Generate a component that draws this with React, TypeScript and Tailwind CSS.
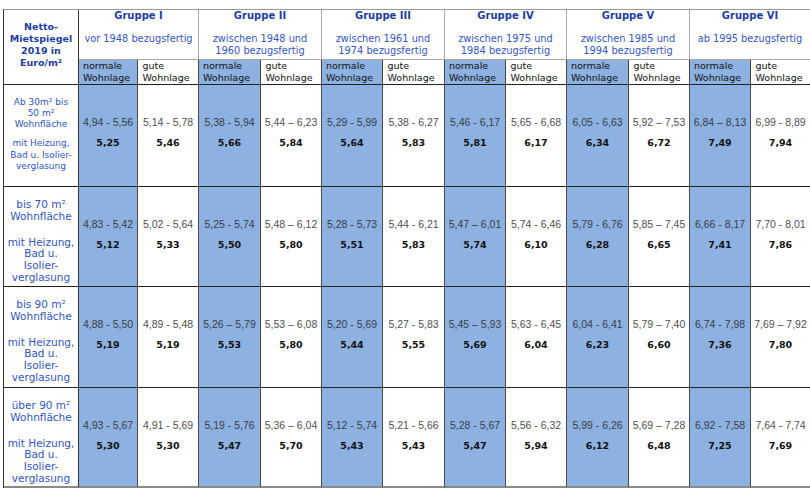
import React from 'react';

// Mietspiegel 2019 – Netto-Kaltmieten in Euro/m²
type Cell = { range: string; avg: string };

const groups = [
  { title: 'Gruppe I', sub: ['vor 1948 bezugsfertig'] },
  { title: 'Gruppe II', sub: ['zwischen 1948 und', '1960 bezugsfertig'] },
  { title: 'Gruppe III', sub: ['zwischen 1961 und', '1974 bezugsfertig'] },
  { title: 'Gruppe IV', sub: ['zwischen 1975 und', '1984 bezugsfertig'] },
  { title: 'Gruppe V', sub: ['zwischen 1985 und', '1994 bezugsfertig'] },
  { title: 'Gruppe VI', sub: ['ab 1995 bezugsfertig'] },
];

const rows: { label: string[]; small?: boolean; cells: Cell[] }[] = [
  {
    label: ['Ab 30m² bis', '50 m²', 'Wohnfläche', '', 'mit Heizung,', 'Bad u. Isolier-', 'verglasung'],
    small: true,
    cells: [
      { range: '4,94 - 5,56', avg: '5,25' },
      { range: '5,14 - 5,78', avg: '5,46' },
      { range: '5,38 - 5,94', avg: '5,66' },
      { range: '5,44 – 6,23', avg: '5,84' },
      { range: '5,29 - 5,99', avg: '5,64' },
      { range: '5,38 - 6,27', avg: '5,83' },
      { range: '5,46 - 6,17', avg: '5,81' },
      { range: '5,65 - 6,68', avg: '6,17' },
      { range: '6,05 - 6,63', avg: '6,34' },
      { range: '5,92 – 7,53', avg: '6,72' },
      { range: '6,84 – 8,13', avg: '7,49' },
      { range: '6,99 - 8,89', avg: '7,94' },
    ],
  },
  {
    label: ['bis 70 m²', 'Wohnfläche', '', 'mit Heizung,', 'Bad u.', 'Isolier-', 'verglasung'],
    cells: [
      { range: '4,83 - 5,42', avg: '5,12' },
      { range: '5,02 - 5,64', avg: '5,33' },
      { range: '5,25 - 5,74', avg: '5,50' },
      { range: '5,48 – 6,12', avg: '5,80' },
      { range: '5,28 - 5,73', avg: '5,51' },
      { range: '5,44 - 6,21', avg: '5,83' },
      { range: '5,47 – 6,01', avg: '5,74' },
      { range: '5,74 - 6,46', avg: '6,10' },
      { range: '5,79 - 6,76', avg: '6,28' },
      { range: '5,85 – 7,45', avg: '6,65' },
      { range: '6,66 - 8,17', avg: '7,41' },
      { range: '7,70 - 8,01', avg: '7,86' },
    ],
  },
  {
    label: ['bis 90 m²', 'Wohnfläche', '', 'mit Heizung,', 'Bad u.', 'Isolier-', 'verglasung'],
    cells: [
      { range: '4,88 - 5,50', avg: '5,19' },
      { range: '4,89 - 5,48', avg: '5,19' },
      { range: '5,26 – 5,79', avg: '5,53' },
      { range: '5,53 – 6,08', avg: '5,80' },
      { range: '5,20 - 5,69', avg: '5,44' },
      { range: '5,27 - 5,83', avg: '5,55' },
      { range: '5,45 – 5,93', avg: '5,69' },
      { range: '5,63 - 6,45', avg: '6,04' },
      { range: '6,04 - 6,41', avg: '6,23' },
      { range: '5,79 – 7,40', avg: '6,60' },
      { range: '6,74 - 7,98', avg: '7,36' },
      { range: '7,69 – 7,92', avg: '7,80' },
    ],
  },
  {
    label: ['über 90 m²', 'Wohnfläche', '', 'mit Heizung,', 'Bad u.', 'Isolier-', 'verglasung'],
    cells: [
      { range: '4,93 - 5,67', avg: '5,30' },
      { range: '4,91 - 5,69', avg: '5,30' },
      { range: '5,19 - 5,76', avg: '5,47' },
      { range: '5,36 – 6,04', avg: '5,70' },
      { range: '5,12 - 5,74', avg: '5,43' },
      { range: '5,21 - 5,66', avg: '5,43' },
      { range: '5,28 - 5,67', avg: '5,47' },
      { range: '5,56 - 6,32', avg: '5,94' },
      { range: '5,99 - 6,26', avg: '6,12' },
      { range: '5,69 – 7,28', avg: '6,48' },
      { range: '6,92 - 7,58', avg: '7,25' },
      { range: '7,64 - 7,74', avg: '7,69' },
    ],
  },
];

export default function App() {
  return (
    <div className="w-[810px] h-[490px] bg-white overflow-hidden font-['DejaVu_Sans',sans-serif]">
      <div className="ml-[3px] mt-[9px] w-[807px] grid grid-cols-[75px_59px_61px_62px_61px_61px_62px_61px_61px_62px_61px_61px_60px] grid-rows-[50px_25px_102px_100px_101px_100px] border-t border-l border-t-[#9a9a9a] border-l-[#333]">
        {/* corner header */}
        <div className="row-span-2 border-r border-b border-r-[#333] border-b-[#222] pt-[10.5px] text-center text-[9.5px] leading-[12.2px] font-bold text-[#1b3da5]">
          <div>Netto-</div>
          <div>Mietspiegel</div>
          <div>2019 in</div>
          <div>Euro/m²</div>
        </div>

        {/* group headers */}
        {groups.map((g) => (
          <div
            key={g.title}
            className="col-span-2 border-r border-b border-[#a8a8a8] text-center"
          >
            <div className="text-[10px] leading-[12px] font-bold text-[#1d3da2]">{g.title}</div>
            <div className="mt-[11px] text-[9.8px] leading-[12.3px] text-[#3356c2]">
              {g.sub.map((s) => (
                <div key={s}>{s}</div>
              ))}
            </div>
          </div>
        ))}

        {/* sub headers */}
        {groups.map((g) => (
          <React.Fragment key={g.title + '-sub'}>
            <div className="bg-[#8db2e2] border-r border-b border-r-[#444] border-b-[#222] pl-1 text-[9.5px] leading-[12.3px] text-[#111]">
              normale
              <br />
              Wohnlage
            </div>
            <div className="bg-white border-r border-b border-r-[#444] border-b-[#222] pl-[4.5px] text-[9.5px] leading-[12.3px] text-[#111]">
              gute
              <br />
              Wohnlage
            </div>
          </React.Fragment>
        ))}

        {/* data rows */}
        {rows.map((row, ri) => {
          const last = ri === rows.length - 1;
          const bottom = last ? 'border-b-2 border-b-[#8a8a8a]' : 'border-b border-b-[#222]';
          return (
            <React.Fragment key={ri}>
              <div
                className={`border-r border-r-[#333] ${bottom} text-center text-[#2f55c4] ${
                  row.small ? 'pt-[11.7px] text-[9px] leading-[11.2px]' : 'pt-[12px] text-[10.5px] leading-[11.8px]'
                }`}
              >
                {row.label.map((l, li) =>
                  l === '' ? (
                    <div key={li} className={row.small ? 'h-[8px]' : 'h-[14px]'} />
                  ) : (
                    <div key={li}>{l}</div>
                  )
                )}
              </div>
              {row.cells.map((c, ci) => {
                const blue = ci % 2 === 0;
                return (
                  <div
                    key={ci}
                    className={`flex flex-col items-center pt-[30px] border-r border-r-[#4a4a4a] ${bottom} ${
                      blue ? 'bg-[#8db2e2]' : 'bg-white'
                    }`}
                  >
                    <div
                      className={`font-['Liberation_Sans_Narrow','Liberation_Sans',sans-serif] text-[10.5px] leading-[14px] whitespace-nowrap ${
                        blue ? 'text-[#383c46]' : 'text-[#505050]'
                      }`}
                    >
                      {c.range}
                    </div>
                    <div className="mt-[7px] text-[9.5px] leading-[14px] font-bold text-[#111]">{c.avg}</div>
                  </div>
                );
              })}
            </React.Fragment>
          );
        })}
      </div>
    </div>
  );
}
